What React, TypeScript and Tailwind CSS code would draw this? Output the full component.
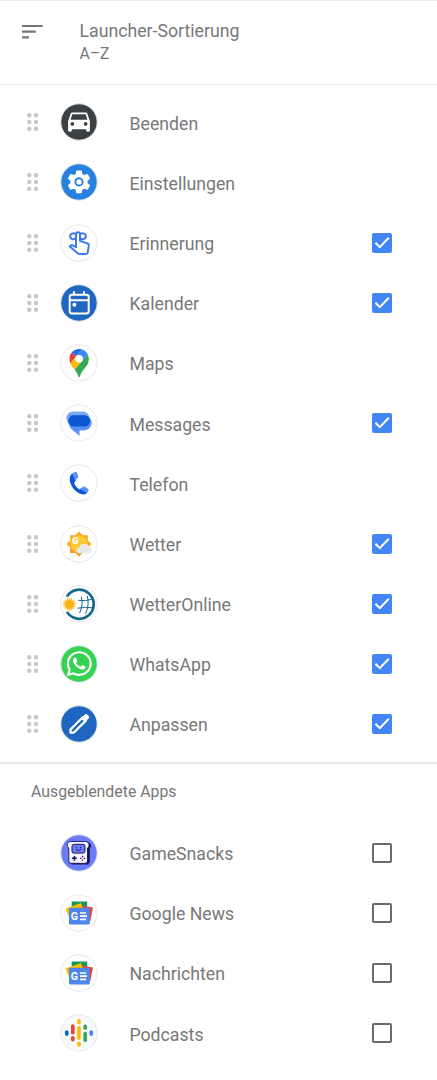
import React, { useState } from 'react'
import { MdDirectionsCar, MdSettings } from 'react-icons/md'
import { FaWhatsapp } from 'react-icons/fa'

type App = {
  name: string
  icon: React.ReactNode
  background: string
  checked?: boolean
}

const visibleApps: App[] = [
  { name: 'Beenden', icon: <MdDirectionsCar x="4.5" y="3.4" size={29} color="#fff" />, background: '#3c4043' },
  { name: 'Einstellungen', icon: <SettingsIcon />, background: '#2781df' },
  { name: 'Erinnerung', icon: <ReminderIcon />, background: '#fff', checked: true },
  { name: 'Kalender', icon: <CalendarIcon />, background: '#1f66c1', checked: true },
  { name: 'Maps', icon: <MapsIcon />, background: '#fff' },
  { name: 'Messages', icon: <MessagesIcon />, background: '#fff', checked: true },
  { name: 'Telefon', icon: <PhoneIcon />, background: '#fff' },
  { name: 'Wetter', icon: <WeatherIcon />, background: '#fff', checked: true },
  { name: 'WetterOnline', icon: <WeatherOnlineIcon />, background: '#fff', checked: true },
  { name: 'WhatsApp', icon: <FaWhatsapp x="5" y="4.4" size={28.5} color="#fff" />, background: '#36d352', checked: true },
  { name: 'Anpassen', icon: <EditIcon />, background: '#1f66c1', checked: true },
]

const hiddenApps: App[] = [
  { name: 'GameSnacks', icon: <GameSnacksIcon />, background: '#6b7cfb' },
  { name: 'Google News', icon: <NewsIcon />, background: '#fff' },
  { name: 'Nachrichten', icon: <NewsIcon />, background: '#fff' },
  { name: 'Podcasts', icon: <PodcastsIcon />, background: '#f8f9fa' },
]

function SettingsIcon() {
  return (
    <>
      <MdSettings x="4.7" y="4.6" size={28.6} color="#fff" />
      <circle cx="19" cy="18.9" r="3.6" fill="#fff" stroke="#2781df" strokeWidth="1.8" />
    </>
  )
}

function ReminderIcon() {
  return (
    <g fill="none" stroke="#4079ea" strokeWidth="2" strokeLinejoin="round" strokeLinecap="round">
      <path d="M16 23.2V10.2a2 2 0 0 1 4 0v6.7l7.6 2.6c.9.3 1.3.9 1.2 1.8l-1 6.8c-.2 1.2-.9 1.8-2 1.8h-6.5c-.8 0-1.4-.2-1.9-.8l-7.6-6.6 1-1c.4-.4.9-.5 1.5-.3z" />
      <path d="M16 10.6c-1-1.2-2.3-1.4-3.5-1.1a2.9 2.9 0 0 0 0 5.7c1.4.3 2.6-.2 3.5-1.2M20 10.6c1-1.2 2.3-1.4 3.5-1.1a2.9 2.9 0 0 1 0 5.7c-1.4.3-2.6-.2-3.5-1.2" />
    </g>
  )
}

function CalendarIcon() {
  return (
    <>
      <rect x="9.7" y="10.7" width="19" height="18.8" rx="2.3" fill="none" stroke="#fff" strokeWidth="2" />
      <path d="M9.7 16.3h19M13.9 7.2v3M24 7.2v3" stroke="#fff" strokeWidth="1.9" />
      <circle cx="14.4" cy="20.8" r="2" fill="#fff" />
    </>
  )
}

function MapsIcon() {
  return (
    <svg x="9.3" y="5" width="19.6" height="28" viewBox="0 0 92.3 132.3">
      <path fill="#1a73e8" d="M60.2 2.2C55.8.8 51 0 46.1 0 32 0 19.3 6.4 10.8 16.5l21.8 18.3L60.2 2.2z" />
      <path fill="#ea4335" d="M10.8 16.5C4.1 24.5 0 34.9 0 46.1c0 8.7 1.7 15.7 4.6 22l28-33.3-21.8-18.3z" />
      <path fill="#4285f4" d="M46.2 28.5c9.8 0 17.7 7.9 17.7 17.7 0 4.3-1.6 8.3-4.2 11.4 0 0 13.9-16.6 27.5-32.7-5.6-10.8-15.3-19-27-22.7L32.6 34.8c3.3-3.8 8.1-6.3 13.6-6.3" />
      <path fill="#fbbc04" d="M46.2 63.8c-9.8 0-17.7-7.9-17.7-17.7 0-4.3 1.5-8.3 4.1-11.3l-28 33.3c4.8 10.6 12.8 19.2 21 29.9l34.1-40.5c-3.3 3.9-8.1 6.3-13.5 6.3" />
      <path fill="#34a853" d="M59.1 109.2c15.4-24.1 33.3-35 33.3-63 0-7.7-1.9-14.9-5.2-21.3L25.6 98c2.6 3.4 5.3 7.3 7.9 11.3 9.4 14.5 6.8 23.1 12.8 23.1s3.4-8.7 12.8-23.2" />
      <circle cx="46.2" cy="46.2" r="17.7" fill="#fff" />
    </svg>
  )
}

function MessagesIcon() {
  return (
    <>
      <rect x="6.4" y="7.6" width="23" height="13.5" rx="6.5" fill="#7ba7f9" />
      <path d="M9 11h14.5c4.5 0 8.2 3.4 8.2 7.8s-3.7 7.7-8.2 7.7h-4V32l-6.3-5.6C10 24.5 8.5 21 8.5 17.5z" fill="#5b8ff9" />
      <rect x="8.5" y="11.2" width="21.5" height="11.4" rx="5.5" fill="#0b57d0" />
    </>
  )
}

function PhoneIcon() {
  return (
    <>
      <path d="M12.3 9.2c-3.4 2.7-3.3 8-.4 13s8.2 9.1 13.7 8.1l2-2.2-6.3-4.2-2 1.5c-2.5-1.5-4.1-3.6-5.2-6.3l1.7-2.7z" fill="#0b57d0" />
      <path d="M12.6 9.3 15.2 8c.8-.4 1.5-.1 1.8.7l1.2 3.6c.2.8 0 1.4-.6 1.9l-2.8 2.4z" fill="#5b8ff9" />
      <path d="m20 25.2 2.6-2.2c.7-.6 1.3-.7 2.1-.3l3.2 2c.8.5 1 1.2.6 1.9l-1.5 2.5z" fill="#5b8ff9" />
    </>
  )
}

function WeatherIcon() {
  return (
    <>
      <rect x="10.2" y="10.2" width="17.6" height="17.6" fill="#f9ab22" />
      <rect x="10.2" y="10.2" width="17.6" height="17.6" fill="#f9ab22" transform="rotate(45 19 19)" />
      <path d="M10.2 23.5v4.3h5.5l3.3 3.5 4-4z" fill="#fa9225" />
      <circle cx="19" cy="19" r="8.8" fill="#fdc934" />
      <text x="12.3" y="19.4" fill="#fff" fontFamily="Roboto, sans-serif" fontWeight="900" fontSize="9">G</text>
      <path d="M19.5 28.5a3 3 0 0 1 0-6 5.2 5.2 0 0 1 9.6-.9 3.5 3.5 0 0 1-.4 6.9z" fill="#e6e8eb" />
    </>
  )
}

function WeatherOnlineIcon() {
  return (
    <>
      <path d="M6.9 11.6a14.5 14.5 0 1 1 0 15.3" fill="none" stroke="#17688f" strokeWidth="2.7" />
      <g fill="none" stroke="#17688f" strokeWidth="1">
        <path d="M18.5 15.4q7 1 13.5-1.2M17.5 23.2q8-1.5 15.5-.4" />
        <path d="M21.3 11.7q2.2 8-1.7 16.3M27.2 10.8q2.5 8.5-1.6 18" />
      </g>
      <path
        d="M9.3 12.9v12.8M2.9 19.3h12.8M4.8 14.8l9 9M4.8 23.8l9-9M6.9 13.4l4.8 11.8M11.7 13.4 6.9 25.2M3.4 16.9l11.8 4.8M3.4 21.7l11.8-4.8"
        stroke="#fbb112"
        strokeWidth="1.1"
      />
      <circle cx="9.3" cy="19.3" r="4.4" fill="#fbb112" />
    </>
  )
}

function EditIcon() {
  return (
    <g fill="none" stroke="#fff" strokeWidth="2.2" strokeLinejoin="round">
      <path d="M10.5 27.7v-3.2L22.8 12.2l3.2 3.2-12.3 12.3z" />
      <path d="m21.8 13.2 3.3-3.1q.9-.9 1.8 0l1.3 1.3q.9.9 0 1.8L25 16.4z" fill="#fff" strokeWidth="1.2" />
    </g>
  )
}

function GameSnacksIcon() {
  return (
    <>
      <path d="M10 8h17q4 .5 4 4l-1.2 3v13l-1.8 2.5H12l-3-2z" fill="#17135a" />
      <path
        d="M10.7 7.5h14.8c4.3 0 4.3 5.5 2 6.5V27q0 2.3-2.3 2.3H11Q8.8 29.3 8.8 27V14C6.5 13 6.5 7.5 10.7 7.5z"
        fill="#f7f5fb"
        stroke="#17135a"
        strokeWidth="0.9"
      />
      <rect x="12" y="10.3" width="13" height="8.8" rx="2" fill="#6b7cfb" stroke="#17135a" />
      <path d="M16.2 12.8v1.4M20.8 12.8v1.4M15.8 15.4q2.7 2.4 5.4 0" fill="none" stroke="#17135a" strokeWidth="0.9" />
      <path d="M14.4 21.9v4.8M12 24.3h4.8" stroke="#17135a" strokeWidth="1.6" />
      <path d="M22.6 21.8v1.4M22.6 25.4v1.4M20.1 24.3h1.4M23.7 24.3h1.4" stroke="#17135a" strokeWidth="1.3" />
    </>
  )
}

function NewsIcon() {
  return (
    <>
      <path d="M11.7 7.5h15.5v9H11.7z" fill="#149c56" />
      <path d="m18 11 15 2.5L30.300 27H20z" fill="#ea4335" />
      <path d="m5.5 14.6 15.5-5.7 3 8.5L10 26z" fill="#fbbc04" />
      <rect x="9" y="13.8" width="20.8" height="16.6" rx="0.8" fill="#4f86ec" />
      <text x="10.7" y="25.6" fill="#fff" fontFamily="Roboto, sans-serif" fontWeight="700" fontSize="10.5">G</text>
      <path d="M20 19h6M20 22.2h7M20 25.3h6" stroke="#fff" strokeWidth="1.7" />
    </>
  )
}

function PodcastsIcon() {
  return (
    <g strokeWidth="3.7" strokeLinecap="round">
      <path d="M6.8 18v2" stroke="#0066da" />
      <path d="M12.8 12.2v6.5M12.8 23.8v1.8" stroke="#ea4335" />
      <path d="M19 6.9v1.7M19 13.9v10.2M19 29.4v1.7" stroke="#fbbc04" />
      <path d="M25.2 12.4v1.6M25.2 19.7v6.5" stroke="#34a853" />
      <path d="M31.2 18v2" stroke="#4285f4" />
    </g>
  )
}

function DragHandle() {
  return (
    <svg viewBox="0 0 12 18" className="h-[18px] w-3">
      {[2.3, 9, 15.7].map((y) => (
        <g key={y} fill="#c8c8c8">
          <circle cx="2.3" cy={y} r="2.2" />
          <circle cx="9" cy={y} r="2.2" />
        </g>
      ))}
    </svg>
  )
}

function Checkbox({ checked, label, onChange }: { checked: boolean; label: string; onChange: () => void }) {
  return (
    <button role="checkbox" aria-checked={checked} aria-label={label} onClick={onChange} className="mr-[44.8px] h-5 w-5">
      <svg viewBox="0 0 20 20" className="h-5 w-5">
        {checked ? (
          <>
            <rect width="20" height="20" rx="2" fill="#4285f4" />
            <path d="m3.4 9.7 4.4 4.4 9-9.3" fill="none" stroke="#fff" strokeWidth="2" />
          </>
        ) : (
          <rect x="1" y="1" width="18" height="18" rx="1" fill="none" stroke="#6b6b6b" strokeWidth="2" />
        )}
      </svg>
    </button>
  )
}

function AppRow({ app, hidden = false }: { app: App; hidden?: boolean }) {
  const [checked, setChecked] = useState(!!app.checked)
  const light = app.background === '#fff' || app.background === '#f8f9fa'

  return (
    <li className="flex h-[60.2px] items-center">
      <div className="w-[60.2px] pl-[26.7px]">{!hidden && <DragHandle />}</div>
      <svg viewBox="0 0 38 38" className="h-[38px] w-[38px] shrink-0">
        <circle cx="19" cy="19" r="18.2" fill={app.background} stroke={light ? '#e9e9ec' : '#dfe3e8'} />
        {app.icon}
      </svg>
      <span className="ml-[31.3px] flex-1 pt-[2.6px] text-[17.72px] leading-6">{app.name}</span>
      {(hidden || app.checked) && (
        <Checkbox checked={checked} label={app.name} onChange={() => setChecked(!checked)} />
      )}
    </li>
  )
}

export default function LauncherSettings() {
  return (
    <main className="h-[1080px] w-full overflow-hidden border-t border-[#ececec] bg-white font-[Roboto,sans-serif] text-[#787878]">
      <header className="flex h-[84px] border-b border-[#ededed] pl-[22px]">
        <svg viewBox="0 0 21 15" className="mt-[23px] h-[15px] w-[21px]">
          <path d="M0 2h20.5M0 7.7h13.8M0 13.3h7" stroke="#757575" strokeWidth="2.2" />
        </svg>
        <div className="ml-[36.5px] pt-[18px]">
          <h1 className="text-[17.7px] leading-6">Launcher-Sortierung</h1>
          <p className="pt-px text-[15.7px] leading-5">A–Z</p>
        </div>
      </header>

      <ul className="h-[677px] pt-[7.2px]">
        {visibleApps.map((app) => (
          <AppRow key={app.name} app={app} />
        ))}
      </ul>

      <section className="border-t-2 border-[#e8e8e8]">
        <h2 className="h-[58.7px] pt-[18px] pl-[31px] text-[15.85px] leading-5">Ausgeblendete Apps</h2>
        <ul>
          {hiddenApps.map((app) => (
            <AppRow key={app.name} app={app} hidden />
          ))}
        </ul>
      </section>
    </main>
  )
}
